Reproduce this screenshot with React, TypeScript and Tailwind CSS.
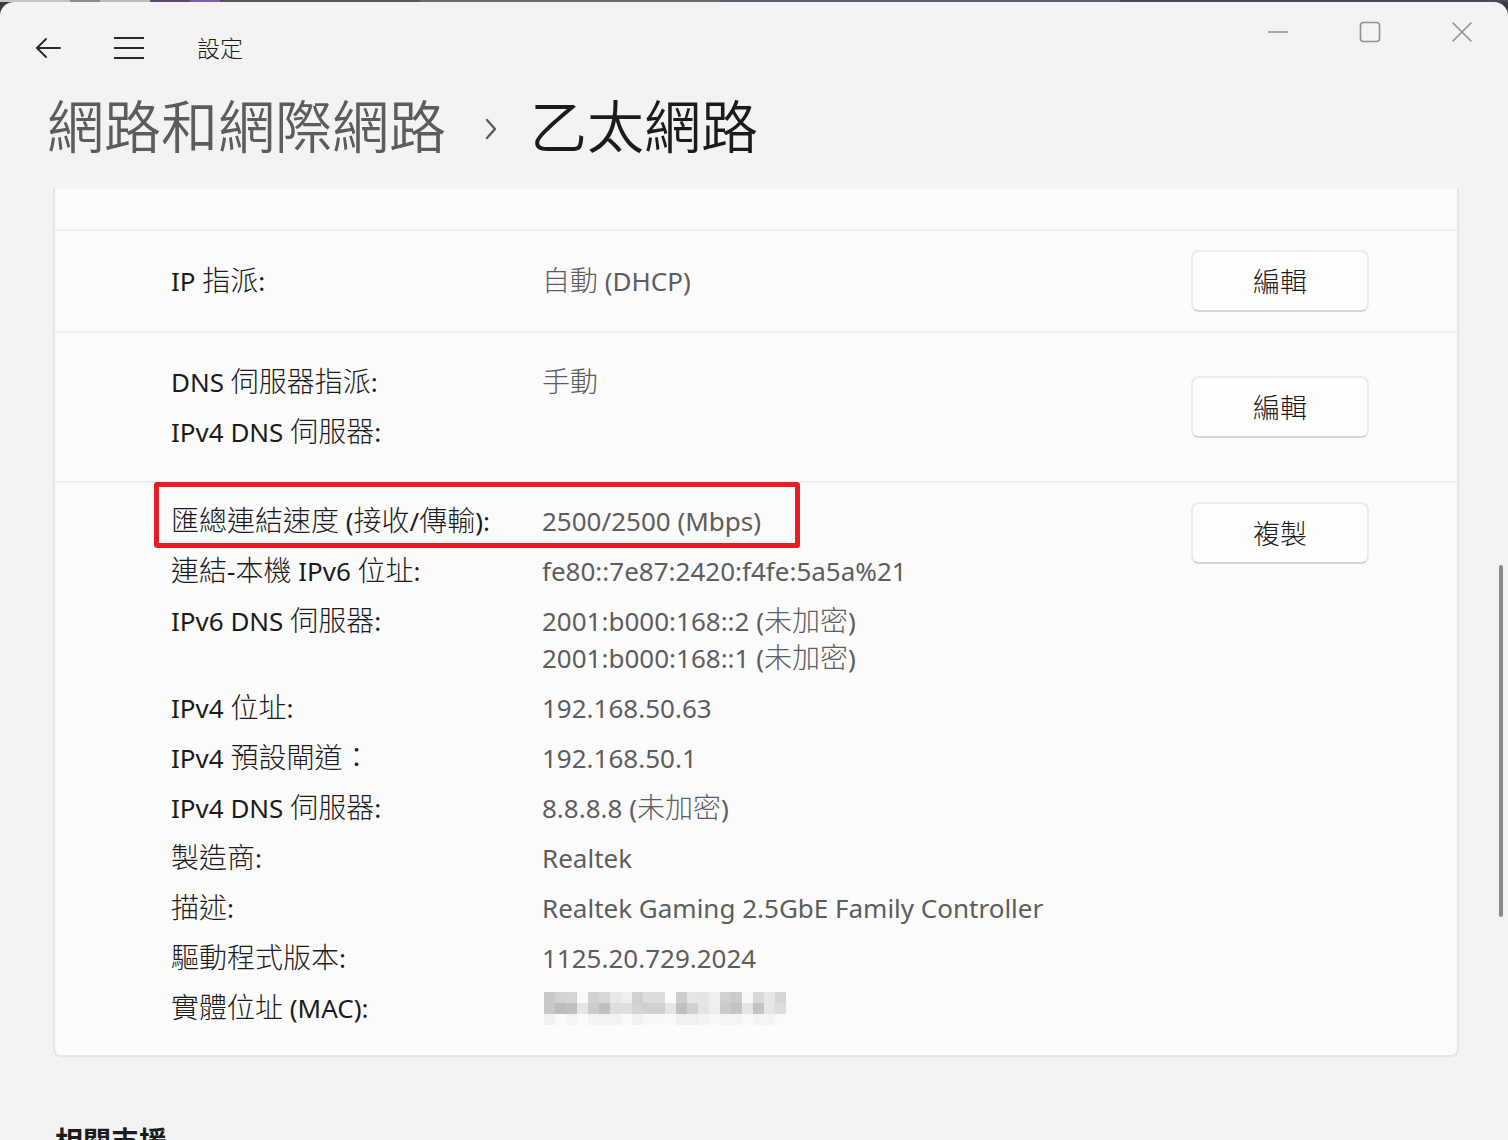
import React from "react";

const R1 = ['#c9c9c9','#d2d2d2','#d4d4d4','#fafafa','#d2d2d2','#d8d8d8','#e8e8e8','#eeeeee','#d0d0d0','#dcdcdc','#dcdcdc','#fafafa','#cdcdcd','#e6e6e6','#e4e4e4','#efefef','#d0d0d0','#cbcbcb','#f8f8f8','#d8d8d8','#e6e6e6','#d6d6d6'];
const R2 = ['#c8c8c8','#bcbcbc','#c0c0c0','#e6e6e6','#cccccc','#c0c0c0','#dedede','#dedede','#d4d4d4','#d0d0d0','#d0d0d0','#e6e6e6','#c0c0c0','#d0d0d0','#e4e4e4','#eeeeee','#cccccc','#c4c4c4','#e6e6e6','#c4c4c4','#e6e6e6','#dcdcdc'];
const R3 = ['#f0f0f0','#fafafa','#f4f4f4','#fafafa','#f3f3f3','#f3f3f3','#f2f2f2','#fafafa','#f1f1f1','#f8f8f8','#f8f8f8','#fafafa','#f0f0f0','#f0f0f0','#f4f4f4','#f8f8f8','#f4f4f4','#f4f4f4','#fafafa','#f4f4f4','#f4f4f4','#fafafa'];

function Mosaic() {
  const rows = [R1, R2, R3];
  return (
    <svg width="242" height="33" viewBox="0 0 242 33" className="block">
      {rows.map((row, ri) =>
        row.map((c, ci) => (
          <rect key={`${ri}-${ci}`} x={ci * 11} y={ri * 11} width="11" height="11" fill={c} />
        ))
      )}
    </svg>
  );
}

const CJK = /([\u3000-\u9fff\uff00-\uffef]+)/;

function T({ s }: { s: string }) {
  const parts = s.split(CJK);
  return (
    <>
      {parts.map((p, i) =>
        CJK.test(p) ? (
          <span key={i} className="text-[28px] leading-none font-light">
            {p}
          </span>
        ) : (
          <React.Fragment key={i}>{p}</React.Fragment>
        )
      )}
    </>
  );
}

function Btn({ children }: { children: string }) {
  return (
    <div className="w-[178px] h-[62px] shrink-0 rounded-[8px] bg-[#fefefe] border-2 border-[#ececec] border-b-[#d6d6d6] flex items-center justify-center text-[27px] font-light text-[#1b1b1b]">
      {children}
    </div>
  );
}

function Line({ s, className }: { s: string; className?: string }) {
  return (
    <div className={`h-[37px] whitespace-nowrap ${className || ""}`}>
      <T s={s} />
    </div>
  );
}

function Row({ label, values }: { label: string; values?: string[] }) {
  return (
    <div className="flex">
      <Line s={label} className="w-[371px] shrink-0 text-[#1b1b1b]" />
      <div className="flex flex-col text-[#5d5d5d]">
        {(values || []).map((v, i) => (
          <Line key={i} s={v} />
        ))}
      </div>
    </div>
  );
}

export default function App() {
  return (
    <div className="relative w-[1508px] h-[1140px] overflow-hidden bg-[#3c3c3c] font-['Noto_Sans','Noto_Sans_CJK_TC',sans-serif]">
      {/* wallpaper strip */}
      <div className="flex h-[2px]">
        <div className="w-[70px] bg-[#c4c4c4]" />
        <div className="w-[30px] bg-[#8c8c8c]" />
        <div className="w-[50px] bg-[#bdbdbd]" />
        <div className="w-[40px] bg-[#5a4a6e]" />
        <div className="w-[30px] bg-[#7b5fa8]" />
        <div className="w-[200px] bg-[#555555]" />
        <div className="w-[300px] bg-[#6a6a70]" />
        <div className="w-[400px] bg-[#5d5e6a]" />
        <div className="flex-1 bg-[#4b4b55]" />
      </div>
      {/* window */}
      <div className="relative h-[1138px] bg-[#f3f3f3] rounded-t-[14px] flex flex-col">
        {/* title bar */}
        <div className="flex h-[92px] shrink-0">
          <div className="flex items-center h-full">
            <svg width="26" height="24" viewBox="0 0 26 24" className="ml-[35px]">
              <path d="M25 12 H2 M11 3 L2 12 L11 21" fill="none" stroke="#2a2a2a" strokeWidth="2" strokeLinecap="round" strokeLinejoin="round" />
            </svg>
            <svg width="32" height="24" viewBox="0 0 32 24" className="ml-[52px]">
              <path d="M1 2 H31 M1 12 H31 M1 22 H31" fill="none" stroke="#2a2a2a" strokeWidth="2" />
            </svg>
            <span className="ml-[52px] text-[23px] leading-[30px] font-light text-[#1b1b1b]">設定</span>
          </div>
          <div className="ml-auto flex h-[60px] items-center">
            <div className="w-[92px] flex justify-center">
              <svg width="22" height="4" viewBox="0 0 22 4">
                <path d="M1 2 H21" stroke="#8f8f8f" strokeWidth="1.6" />
              </svg>
            </div>
            <div className="w-[92px] flex justify-center">
              <svg width="22" height="22" viewBox="0 0 22 22">
                <rect x="1.5" y="1.5" width="19" height="19" rx="3" fill="none" stroke="#8f8f8f" strokeWidth="1.6" />
              </svg>
            </div>
            <div className="w-[92px] flex justify-center">
              <svg width="22" height="22" viewBox="0 0 22 22">
                <path d="M1.5 1.5 L20.5 20.5 M20.5 1.5 L1.5 20.5" stroke="#8f8f8f" strokeWidth="1.6" />
              </svg>
            </div>
          </div>
        </div>

        {/* page title */}
        <div className="flex items-center h-[64px] shrink-0 pl-[47px] text-[57px] leading-[64px] font-[350]">
          <span className="text-[#5c5c5c]">網路和網際網路</span>
          <span className="w-[84px] pl-[6px] flex justify-center">
            <svg width="14" height="24" viewBox="0 0 14 24" className="mt-[6px]">
              <path d="M3 3 L11 12 L3 21" fill="none" stroke="#5c5c5c" strokeWidth="2.4" strokeLinecap="round" strokeLinejoin="round" />
            </svg>
          </span>
          <span className="text-[#1b1b1b]">乙太網路</span>
        </div>

        {/* card */}
        <div className="mt-[31px] ml-[53px] w-[1406px] bg-[#fbfbfb] border-x-2 border-b-2 border-[#e6e6e6] rounded-b-[8px] text-[26px] leading-[37px]">
          <div className="h-[40px]" />
          <div className="h-[2px] bg-[#efefef]" />
          {/* IP assignment */}
          <div className="h-[100px] flex items-center pl-[116px] pr-[88px]">
            <div className="flex-1">
              <Row label="IP 指派:" values={["自動 (DHCP)"]} />
            </div>
            <Btn>編輯</Btn>
          </div>
          <div className="h-[2px] bg-[#efefef]" />
          {/* DNS */}
          <div className="h-[148px] flex items-center pl-[116px] pr-[88px]">
            <div className="flex-1 flex flex-col gap-[13px]">
              <Row label="DNS 伺服器指派:" values={["手動"]} />
              <Row label="IPv4 DNS 伺服器:" />
            </div>
            <Btn>編輯</Btn>
          </div>
          <div className="h-[2px] bg-[#efefef]" />
          {/* details */}
          <div className="relative flex items-start pl-[116px] pr-[88px] pt-[19px] pb-[28px]">
            <div className="flex-1 flex flex-col gap-[13px] pt-[1px]">
              <Row label="匯總連結速度 (接收/傳輸):" values={["2500/2500 (Mbps)"]} />
              <Row label="連結-本機 IPv6 位址:" values={["fe80::7e87:2420:f4fe:5a5a%21"]} />
              <Row label="IPv6 DNS 伺服器:" values={["2001:b000:168::2 (未加密)", "2001:b000:168::1 (未加密)"]} />
              <Row label="IPv4 位址:" values={["192.168.50.63"]} />
              <Row label="IPv4 預設閘道：" values={["192.168.50.1"]} />
              <Row label="IPv4 DNS 伺服器:" values={["8.8.8.8 (未加密)"]} />
              <Row label="製造商:" values={["Realtek"]} />
              <Row label="描述:" values={["Realtek Gaming 2.5GbE Family Controller"]} />
              <Row label="驅動程式版本:" values={["1125.20.729.2024"]} />
              <div className="flex">
                <Line s="實體位址 (MAC):" className="w-[371px] shrink-0 text-[#1b1b1b]" />
                <div className="flex items-center h-[37px] pl-[2px]">
                  <Mosaic />
                </div>
              </div>
            </div>
            <Btn>複製</Btn>
            {/* highlight */}
            <div className="absolute left-[99px] top-[-1px] w-[646px] h-[66px] border-[5px] border-[#e81c24] rounded-[3px]" />
          </div>
        </div>

        <div className="mt-[66px] pl-[55px] text-[28px] leading-[36px] font-semibold text-[#1b1b1b]">相關支援</div>

        {/* scrollbar */}
        <div className="absolute left-[1499px] top-[563px] w-[4px] h-[352px] rounded-full bg-[#8a8a8a]" />
      </div>
    </div>
  );
}
